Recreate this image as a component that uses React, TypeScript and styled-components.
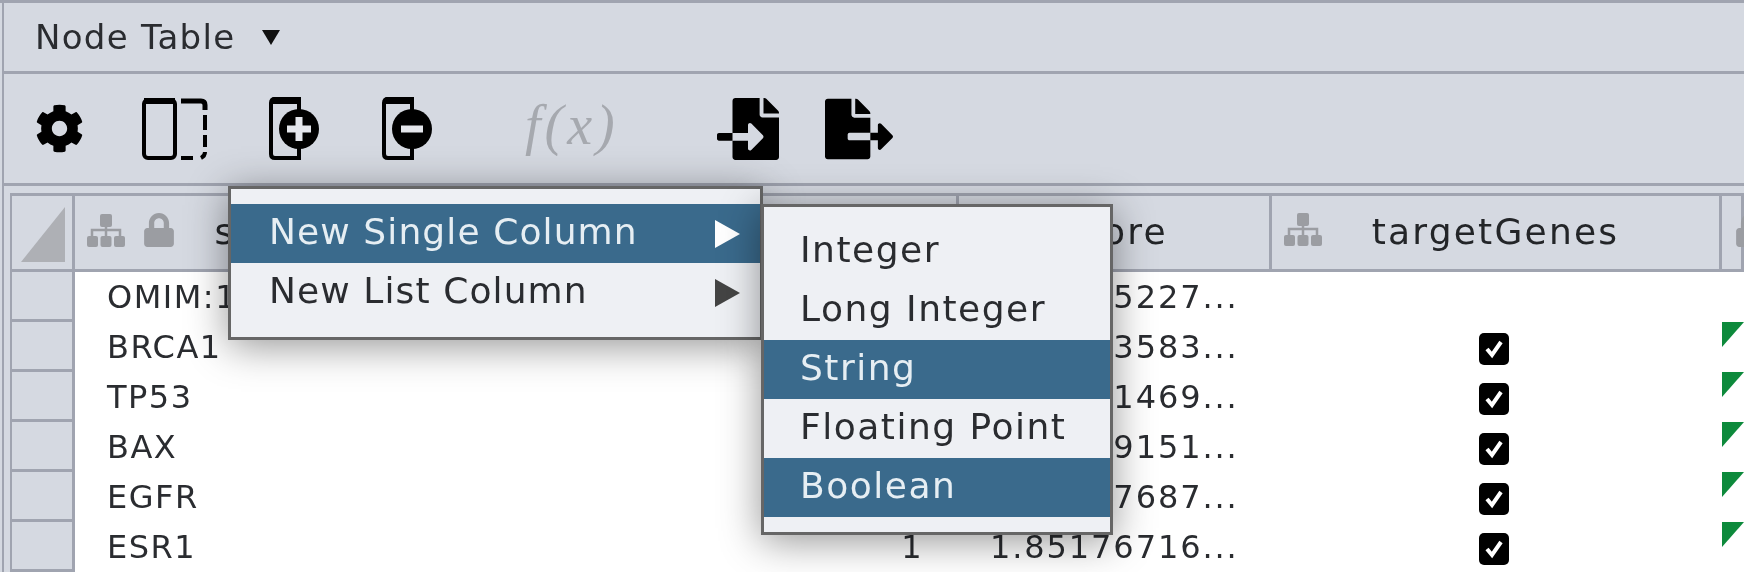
import { createGlobalStyle } from "styled-components";
import styled from "styled-components";
import { FaCog, FaFileExport, FaFileImport, FaLock } from "react-icons/fa";

const GlobalStyle = createGlobalStyle`
  html, body {
    margin: 0;
    padding: 0;
    background: #d5d9e1;
    overflow: hidden;
  }
`;

const Page = styled.div`
  position: relative;
  width: 1744px;
  height: 572px;
  box-sizing: border-box;
  overflow: hidden;
  padding-left: 2px;
  background: #d5d9e1;
  color: #2a2c30;
  font-family: "DejaVu Sans", sans-serif;
  font-size: 32px;
  letter-spacing: 1.5px;
  border-top: 3px solid #a0a4b0;
  filter: blur(0.5px);
`;

const Inner = styled.div`
  border-left: 2px solid #a0a4b0;
  height: 100%;
`;

const TabBar = styled.div`
  box-sizing: border-box;
  height: 71px;
  display: flex;
  align-items: center;
  gap: 27px;
  padding-left: 31px;
  border-bottom: 3px solid #a0a4b0;
  font-size: 34px;
  letter-spacing: 1.3px;
`;

const TabArrow = styled.span`
  width: 0;
  height: 0;
  border-left: 9.5px solid transparent;
  border-right: 9.5px solid transparent;
  border-top: 15px solid #111;
`;

const Toolbar = styled.div`
  box-sizing: border-box;
  height: 112px;
  display: flex;
  align-items: center;
  padding-left: 31px;
  border-bottom: 3px solid #a0a4b0;
  color: #000;
`;

const ToolSlot = styled.div<{ $width: number }>`
  width: ${(p) => p.$width}px;
  flex: none;
  display: flex;
  align-items: center;
`;

const FxLabel = styled.span`
  font-family: "Liberation Serif", serif;
  font-style: italic;
  font-size: 56px;
  letter-spacing: 4px;
  color: #a6a9af;
  margin-bottom: 8px;
`;

const TableWrap = styled.div`
  padding: 7px 0 0 6px;
`;

const Table = styled.div`
  display: grid;
  grid-template-columns: 63px 425px 459px 313px 450px 1fr;
  grid-template-rows: 76px;
  grid-auto-rows: 50px;
  border-top: 3px solid #a0a4b0;
  border-left: 2px solid #a0a4b0;
  background: #fff;
`;

const CornerCell = styled.div`
  box-sizing: border-box;
  background: #d5d9e1;
  border-right: 3px solid #a0a4b0;
  border-bottom: 3px solid #a0a4b0;
  display: flex;
  align-items: flex-end;
  justify-content: flex-end;
  padding: 0 7px 7px 0;
`;

const HeaderCell = styled.div`
  box-sizing: border-box;
  position: relative;
  display: flex;
  align-items: center;
  justify-content: center;
  background: #d5d9e1;
  border-right: 3px solid #a0a4b0;
  border-bottom: 3px solid #a0a4b0;
  padding-bottom: 3px;
  font-size: 36px;
  letter-spacing: 2.2px;
  color: #232528;
`;

const HeaderIcons = styled.div`
  position: absolute;
  left: 12px;
  top: 17px;
  display: flex;
  gap: 17px;
  align-items: flex-end;
  color: #9b9da2;
`;

const RowHead = styled.div`
  box-sizing: border-box;
  background: #d5d9e1;
  border-right: 3px solid #a0a4b0;
  border-bottom: 3px solid #a0a4b0;
`;

const Cell = styled.div<{ $align?: string; $pad?: number }>`
  display: flex;
  align-items: center;
  overflow: hidden;
  white-space: nowrap;
  justify-content: ${(p) => p.$align ?? "flex-start"};
  padding: 0 ${(p) => (p.$align === "flex-end" ? 36 : 0)}px 0 ${(p) => p.$pad ?? 0}px;
`;

const ScoreCell = styled(Cell)`
  letter-spacing: 1.9px;
`;

const CheckCell = styled(Cell)`
  padding-right: 6px;
  padding-top: 3px;
`;

const CheckBox = styled.span`
  width: 30px;
  height: 32px;
  border-radius: 5px;
  background: #000;
  display: flex;
  align-items: center;
  justify-content: center;
`;

const Flag = styled.span`
  display: block;
  align-self: flex-start;
  width: 0;
  height: 0;
  border-top: 25px solid #0d8a3c;
  border-right: 22px solid transparent;
`;

const Menu = styled.div<{ $left: number; $top: number; $width: number; $spacing: number }>`
  position: absolute;
  left: ${(p) => p.$left}px;
  top: ${(p) => p.$top}px;
  width: ${(p) => p.$width}px;
  box-sizing: border-box;
  padding: 15px 0;
  background: #eef0f4;
  border: 3px solid #666;
  box-shadow: 0 6px 38px rgba(0, 0, 0, 0.42);
  font-size: 36px;
  letter-spacing: ${(p) => p.$spacing}px;
`;

const MenuRow = styled.div<{ $active?: boolean; $pad: number }>`
  height: 59px;
  display: flex;
  align-items: center;
  justify-content: space-between;
  box-sizing: border-box;
  padding: 0 20px 4px ${(p) => p.$pad}px;
  background: ${(p) => (p.$active ? "#3a6a8c" : "transparent")};
  color: ${(p) => (p.$active ? "#e6eef3" : "#2a2c30")};
`;

const SubArrow = styled.span<{ $active?: boolean }>`
  width: 0;
  height: 0;
  border-top: 14.5px solid transparent;
  border-bottom: 14.5px solid transparent;
  border-left: 25px solid ${(p) => (p.$active ? "#fff" : "#444")};
  margin-top: 4px;
`;

function SplitColumnsIcon() {
  return (
    <svg width="68" height="65" viewBox="0 0 68 65" fill="none" stroke="#000" strokeWidth="4">
      <rect x="3" y="4" width="31" height="58" rx="4" />
      <path d="M3 5 H34" strokeWidth="6" />
      <path d="M40 5 H60 Q64 5 64 9 V14" strokeWidth="5" />
      <path d="M64 19 V34" />
      <path d="M64 39 V51" />
      <path d="M64 56 Q64 60 60 62" />
      <path d="M40 62 H52" />
    </svg>
  );
}

function ColumnOpIcon({ minus }: { minus?: boolean }) {
  return (
    <svg width="54" height="65" viewBox="0 0 54 65" fill="none">
      <path d="M3 7 Q3 3 7 3 H31 V62 H7 Q3 62 3 58 Z" stroke="#000" strokeWidth="4" />
      <path d="M3 4 Q3 1 6 1 H29 Q33 1 33 4 V8 H3 Z" fill="#000" />
      <circle cx="31" cy="33" r="20" fill="#000" />
      <path d={minus ? "M20 33 H42" : "M31 21 V45 M19 33 H43"} stroke="#e4e6ec" strokeWidth="7" />
    </svg>
  );
}

function SitemapIcon() {
  return (
    <svg width="38" height="33" viewBox="0 0 38 33" fill="currentColor">
      <rect x="13" y="0" width="12" height="13" rx="2" />
      <path d="M5 24 V16 H33 V24 M19 12 V24" stroke="currentColor" strokeWidth="2.5" fill="none" />
      <rect x="0" y="22" width="11" height="11" rx="2" />
      <rect x="13.5" y="22" width="11" height="11" rx="2" />
      <rect x="27" y="22" width="11" height="11" rx="2" />
    </svg>
  );
}

function CornerTriangle() {
  return (
    <svg width="44" height="55" viewBox="0 0 44 55">
      <polygon points="44,0 44,55 0,55" fill="#aeb0b5" />
    </svg>
  );
}

function CheckMark() {
  return (
    <svg width="20" height="20" viewBox="0 0 20 20" fill="none">
      <path d="M3 10 L8 16 L17 3" stroke="#fff" strokeWidth="4" />
    </svg>
  );
}

const rows = [
  { name: "OMIM:114480", count: "", score: "1.85175227...", target: false },
  { name: "BRCA1", count: "", score: "1.85173583...", target: true },
  { name: "TP53", count: "", score: "1.85171469...", target: true },
  { name: "BAX", count: "", score: "1.85179151...", target: true },
  { name: "EGFR", count: "", score: "1.85177687...", target: true },
  { name: "ESR1", count: "1", score: "1.85176716...", target: true },
];

function Row({ name, count, score, target }: (typeof rows)[number]) {
  return (
    <>
      <RowHead />
      <Cell $pad={32}>{name}</Cell>
      <Cell $align="flex-end">{count}</Cell>
      <ScoreCell $pad={31}>{score}</ScoreCell>
      <CheckCell $align="center">
        {target && (
          <CheckBox>
            <CheckMark />
          </CheckBox>
        )}
      </CheckCell>
      <Cell>{target && <Flag />}</Cell>
    </>
  );
}

export default function App() {
  return (
    <Page>
      <GlobalStyle />
      <Inner>
        <TabBar>
          <span>Node Table</span>
          <TabArrow />
        </TabBar>
        <Toolbar>
          <ToolSlot $width={106}>
            <FaCog size={49} />
          </ToolSlot>
          <ToolSlot $width={127}>
            <SplitColumnsIcon />
          </ToolSlot>
          <ToolSlot $width={113}>
            <ColumnOpIcon />
          </ToolSlot>
          <ToolSlot $width={144}>
            <ColumnOpIcon minus />
          </ToolSlot>
          <ToolSlot $width={192}>
            <FxLabel>f(x)</FxLabel>
          </ToolSlot>
          <ToolSlot $width={108}>
            <FaFileImport size={62} />
          </ToolSlot>
          <ToolSlot $width={80}>
            <FaFileExport size={68} />
          </ToolSlot>
        </Toolbar>
        <TableWrap>
          <Table>
            <CornerCell>
              <CornerTriangle />
            </CornerCell>
            <HeaderCell>
              <HeaderIcons>
                <SitemapIcon />
                <FaLock size={34} />
              </HeaderIcons>
              symbol
            </HeaderCell>
            <HeaderCell />
            <HeaderCell>score</HeaderCell>
            <HeaderCell>
              <HeaderIcons>
                <SitemapIcon />
              </HeaderIcons>
              targetGenes
            </HeaderCell>
            <HeaderCell>
              <HeaderIcons>
                <FaLock size={34} />
              </HeaderIcons>
            </HeaderCell>
            {rows.map((row) => (
              <Row key={row.name} {...row} />
            ))}
          </Table>
        </TableWrap>
      </Inner>
      <Menu $left={228} $top={183} $width={535} $spacing={1.1}>
        <MenuRow $active $pad={38}>
          New Single Column
          <SubArrow $active />
        </MenuRow>
        <MenuRow $pad={38}>
          New List Column
          <SubArrow />
        </MenuRow>
      </Menu>
      <Menu $left={761} $top={201} $width={352} $spacing={1.5}>
        <MenuRow $pad={36}>Integer</MenuRow>
        <MenuRow $pad={36}>Long Integer</MenuRow>
        <MenuRow $active $pad={36}>String</MenuRow>
        <MenuRow $pad={36}>Floating Point</MenuRow>
        <MenuRow $active $pad={36}>Boolean</MenuRow>
      </Menu>
    </Page>
  );
}
